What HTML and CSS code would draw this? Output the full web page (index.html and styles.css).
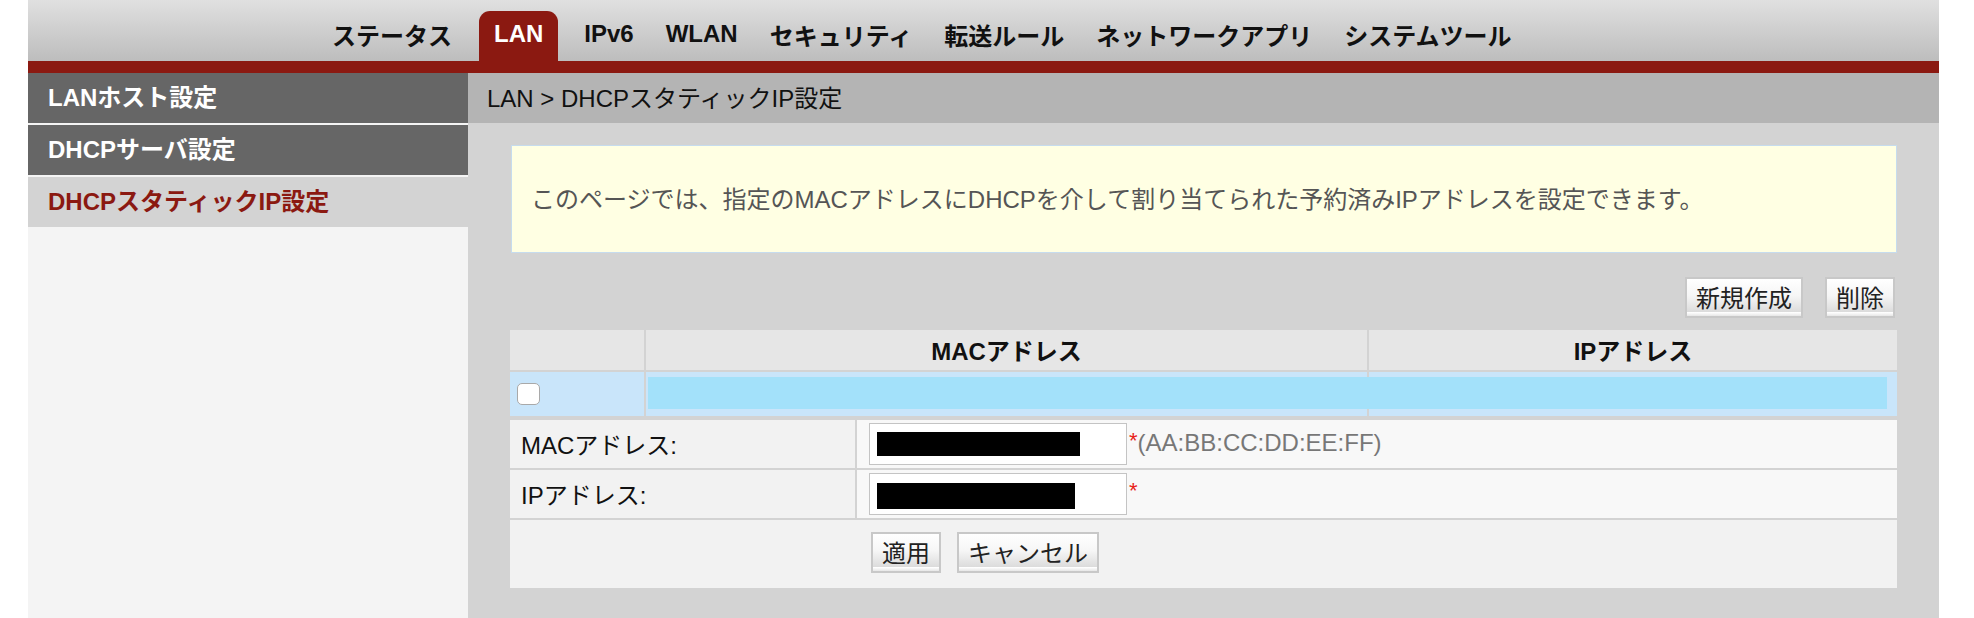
FILE: index.html
```html
<!DOCTYPE html>
<html lang="ja">
<head>
<meta charset="utf-8">
<title>DHCPスタティックIP設定</title>
<link rel="stylesheet" href="styles.css">
</head>
<body>
<div class="page">
  <div class="topnav">
    <span class="nav-item">ステータス</span>
    <span class="nav-item active">LAN</span>
    <span class="nav-item">IPv6</span>
    <span class="nav-item">WLAN</span>
    <span class="nav-item">セキュリティ</span>
    <span class="nav-item">転送ルール</span>
    <span class="nav-item">ネットワークアプリ</span>
    <span class="nav-item">システムツール</span>
  </div>
  <div class="redbar"></div>
  <div class="layout">
    <div class="sidebar">
      <div class="side-item">LANホスト設定</div>
      <div class="side-item">DHCPサーバ設定</div>
      <div class="side-item current">DHCPスタティックIP設定</div>
    </div>
    <div class="main">
      <div class="breadcrumb">LAN &gt; DHCPスタティックIP設定</div>
      <div class="info">このページでは、指定のMACアドレスにDHCPを介して割り当てられた予約済みIPアドレスを設定できます。</div>
      <div class="actions">
        <span class="btn">新規作成</span>
        <span class="btn">削除</span>
      </div>
      <div class="list">
        <div class="cell head"></div>
        <div class="cell head">MACアドレス</div>
        <div class="cell head">IPアドレス</div>
        <div class="cell sel chk-cell"><span class="checkbox"></span></div>
        <div class="cell sel"></div>
        <div class="cell sel"></div>
        <div class="sel-bar"></div>
      </div>
      <div class="form">
        <div class="fcell label">MACアドレス:</div>
        <div class="fcell field">
          <div class="textbox"><span class="redact mac"></span></div>
          <span class="req">*</span><span class="hint">(AA:BB:CC:DD:EE:FF)</span>
        </div>
        <div class="fcell label">IPアドレス:</div>
        <div class="fcell field">
          <div class="textbox"><span class="redact ip"></span></div>
          <span class="req">*</span>
        </div>
        <div class="fcell buttons">
          <span class="btn">適用</span>
          <span class="btn">キャンセル</span>
        </div>
      </div>
    </div>
  </div>
</div>
</body>
</html>
```
FILE: styles.css
```css
html, body {
  margin: 0;
  padding: 0;
  background: #ffffff;
}
body {
  font-family: "Liberation Sans", "Noto Sans CJK JP", sans-serif;
  font-size: 24px;
  color: #111;
}
.page {
  margin-left: 28px;
  width: 1911px;
  height: 618px;
  display: flex;
  flex-direction: column;
}
.topnav {
  height: 61px;
  background: linear-gradient(#e0e0e0, #bdbdbd);
  display: flex;
  align-items: flex-end;
  padding-left: 288px;
  box-sizing: border-box;
}
.nav-item {
  height: 50px;
  display: flex;
  align-items: center;
  padding: 0 16px 4px;
  box-sizing: border-box;
  font-weight: bold;
  font-size: 24px;
  color: #111;
  white-space: nowrap;
}
.nav-item.active {
  background: #8b1911;
  color: #fff;
  border-radius: 11px 11px 0 0;
  padding: 0 15px 4px;
  margin: 0 10px 0 11px;
}
.redbar {
  height: 12px;
  background: #8b1911;
}
.layout {
  flex: 1;
  display: flex;
}
.sidebar {
  width: 440px;
  background: #f4f4f4;
  display: flex;
  flex-direction: column;
  gap: 2px;
}
.side-item {
  height: 50px;
  background: #666666;
  color: #fff;
  font-weight: bold;
  font-size: 24px;
  display: flex;
  align-items: center;
  padding-left: 20px;
  padding-bottom: 6px;
  box-sizing: border-box;
}
.side-item.current {
  background: #d3d3d3;
  color: #8b1911;
}
.main {
  flex: 1;
  background: #d3d3d3;
  display: flex;
  flex-direction: column;
}
.breadcrumb {
  height: 50px;
  background: #b4b4b4;
  display: flex;
  align-items: center;
  padding-left: 19px;
  padding-bottom: 4px;
  box-sizing: border-box;
}
.info {
  margin: 22px 42px 0 43px;
  height: 108px;
  box-sizing: border-box;
  border: 1px solid #c6dcee;
  background: #ffffe3;
  color: #555;
  display: flex;
  align-items: center;
  padding-left: 19px;
  padding-bottom: 4px;
}
.actions {
  margin-top: 24px;
  display: flex;
  justify-content: flex-end;
  gap: 22px;
  padding-right: 44px;
}
.btn {
  display: inline-flex;
  align-items: center;
  justify-content: center;
  height: 41px;
  box-sizing: border-box;
  padding: 0 9px 2px;
  border: 2px solid #c8c8c8;
  background: linear-gradient(#ffffff 0%, #f6f6f6 45%, #dcdcdc 88%, #ffffff 90%, #e6e6e6 100%);
  color: #222;
  white-space: nowrap;
}
.list {
  position: relative;
  margin: 12px 42px 0 42px;
  display: grid;
  grid-template-columns: 134px 721px 1fr;
  grid-template-rows: 40px 44px;
  gap: 2px;
}
.cell {
  display: flex;
  align-items: center;
  justify-content: center;
}
.cell.head {
  background: #e6e6e6;
  font-weight: bold;
  padding-bottom: 2px;
}
.cell.sel {
  background: #c9e5fa;
}
.chk-cell {
  justify-content: flex-start;
  padding-left: 7px;
}
.checkbox {
  width: 23px;
  height: 22px;
  box-sizing: border-box;
  background: #fff;
  border: 1px solid #a9a9a9;
  border-radius: 5px;
}
.sel-bar {
  position: absolute;
  left: 138px;
  right: 10px;
  top: 47px;
  height: 32px;
  background: #a3e1fa;
}
.form {
  margin: 4px 42px 0 42px;
  display: grid;
  grid-template-columns: 345px 1fr;
  grid-template-rows: 48px 48px 68px;
  gap: 2px;
}
.fcell {
  display: flex;
  align-items: center;
}
.label {
  background: #f2f2f2;
  padding-left: 11px;
  padding-bottom: 2px;
}
.field {
  background: #f8f8f8;
  padding-left: 12px;
}
.textbox {
  width: 258px;
  height: 42px;
  box-sizing: border-box;
  background: #fff;
  border: 1px solid #c4c4c4;
  display: flex;
  align-items: center;
  padding-left: 7px;
}
.redact {
  display: block;
  background: #000;
}
.redact.mac {
  width: 203px;
  height: 24px;
}
.redact.ip {
  width: 198px;
  height: 26px;
  margin-top: 4px;
}
.req {
  color: #e8221b;
  margin-left: 2px;
  align-self: flex-start;
  margin-top: 8px;
  font-size: 22px;
}
.hint {
  color: #777;
  padding-bottom: 2px;
}
.buttons {
  grid-column: 1 / 3;
  background: #f2f2f2;
  padding-left: 361px;
  gap: 16px;
  padding-bottom: 4px;
}
```
